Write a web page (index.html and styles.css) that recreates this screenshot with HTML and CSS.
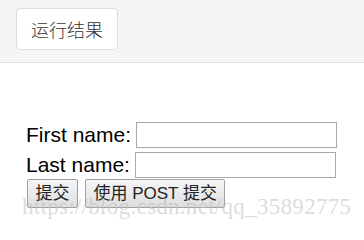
FILE: index.html
```html
<!DOCTYPE html>
<html>
<head>
<meta charset="utf-8">
<link rel="stylesheet" href="styles.css">
</head>
<body>
<div class="topbar">
  <button class="run-btn">运行结果</button>
</div>
<div class="content">
  <form class="form">
    <div class="row"><span class="label">First name:</span><input class="field" type="text"></div>
    <div class="row"><span class="label">Last name:</span><input class="field" type="text"></div>
    <div class="buttons">
      <button class="btn" type="button">提交</button>
      <button class="btn" type="button">使用 POST 提交</button>
    </div>
  </form>
  <div class="watermark">https://blog.csdn.net/qq_35892775</div>
</div>
</body>
</html>
```
FILE: styles.css
```css
html, body {
  margin: 0;
  padding: 0;
  background: #fff;
  width: 364px;
  height: 227px;
  overflow: hidden;
}
body {
  font-family: "Liberation Sans", "Noto Sans CJK SC", sans-serif;
}
.topbar {
  background: #f5f5f5;
  height: 63px;
  border-bottom: 1px solid #e3e3e3;
  box-sizing: border-box;
  padding: 8px 16px;
}
.run-btn {
  width: 102px;
  height: 42px;
  background: #fff;
  border: 1px solid #dcdcdc;
  border-radius: 4px;
  font-family: "Noto Sans CJK SC", sans-serif;
  font-size: 18px;
  font-weight: 300;
  color: #333;
  padding: 0;
}
.content {
  position: relative;
  padding: 57px 0 0 26px;
  height: 163px;
  box-sizing: border-box;
}
.form {
  margin: 0;
}
.row {
  display: flex;
  align-items: center;
  height: 30px;
}
.label {
  font-size: 21px;
  color: #000;
  margin-right: 5px;
}
.field {
  width: 201px;
  height: 26px;
  box-sizing: border-box;
  border: 1px solid #a9a9a9;
  padding: 0;
  margin: 0;
}
.buttons {
  display: flex;
  gap: 7px;
  margin-top: -1px;
  margin-left: 1px;
}
.btn {
  height: 29px;
  box-sizing: border-box;
  border: 1px solid #a0a0a0;
  border-radius: 2px;
  background: linear-gradient(#f6f6f6, #dedede);
  font-family: "Liberation Sans", "Noto Sans CJK SC", sans-serif;
  font-size: 17px;
  color: #222;
  padding: 0 7.5px;
  line-height: 27px;
}
.watermark {
  position: absolute;
  left: 22px;
  top: 131px;
  font-family: "Liberation Serif", serif;
  font-size: 23px;
  color: rgba(190, 190, 190, 0.55);
  white-space: nowrap;
  letter-spacing: 0.3px;
}
```
